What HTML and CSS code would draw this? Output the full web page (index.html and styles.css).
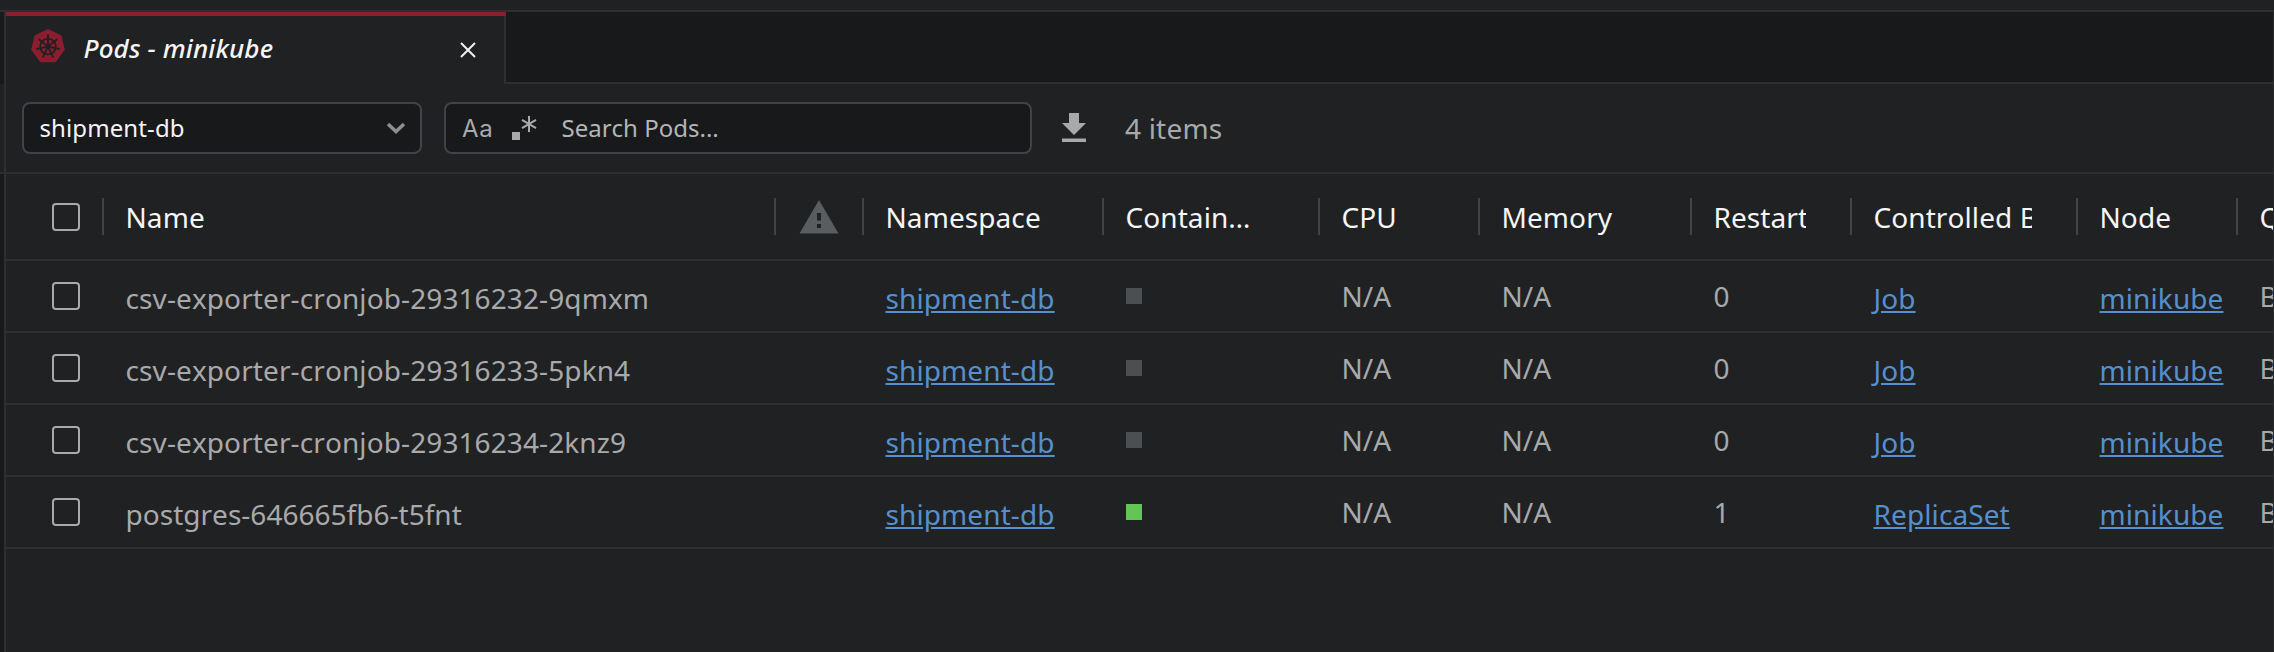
FILE: index.html
```html
<!DOCTYPE html>
<html lang="en">
<head>
<meta charset="utf-8">
<title>Pods - minikube</title>
<link rel="stylesheet" href="styles.css">
</head>
<body>
<div class="topstrip"></div>
<div class="app">
  <div class="gutter"><div class="gutter-tabs"></div><div class="gutter-toolbar"></div></div>
  <main class="panel">
    <nav class="tabs">
      <div class="tab">
        <svg class="tab-icon" viewBox="0 0 34 34">
          <path class="hept" d="M17 0 L30.400 6.400 L33.800 20.800 L24.600 33.200 L9.400 33.200 L.2 20.800 L3.600 6.400Z"/>
          <g class="wheel">
            <circle cx="17" cy="17.500" r="7.800"/>
            <path d="M17 17.500V5.500"/>
            <path d="M17 17.500V5.500" transform="rotate(51.430 17 17.500)"/>
            <path d="M17 17.500V5.500" transform="rotate(102.860 17 17.500)"/>
            <path d="M17 17.500V5.500" transform="rotate(154.290 17 17.500)"/>
            <path d="M17 17.500V5.500" transform="rotate(205.710 17 17.500)"/>
            <path d="M17 17.500V5.500" transform="rotate(257.140 17 17.500)"/>
            <path d="M17 17.500V5.500" transform="rotate(308.570 17 17.500)"/>
          </g>
        </svg>
        <span class="tab-title">Pods - minikube</span>
        <svg class="close" viewBox="0 0 16 16"><path d="M1 1L15 15M15 1L1 15"/></svg>
      </div>
      <div class="tabs-rest"></div>
    </nav>
    <div class="toolbar">
      <div class="select"><span>shipment-db</span><svg viewBox="0 0 20 12"><path d="M2 2L10 9.500L18 2"/></svg></div>
      <div class="search">
        <span class="case">Aa</span>
        <svg class="regex" viewBox="0 0 26 26"><path class="dot" d="M0 17h8v8H0z"/><path class="star" d="M17 1v16M10 4.800l14 8.400M24 4.800l-14 8.400"/></svg>
        <span class="placeholder">Search Pods...</span>
      </div>
      <svg class="download" viewBox="0 0 24 30"><path d="M7 0h10v10h7L12 22 0 10h7zM0 25.500h24v3.500H0z"/></svg>
      <span class="count">4 items</span>
    </div>
    <section class="table">
      <div class="row head">
        <div class="pick"><i class="box"></i></div>
        <div class="th">Name</div>
        <div class="th warn"><svg viewBox="0 0 40 34"><path fill-rule="evenodd" d="M20 0L39.500 33.500H.5zM18 13v7.500h4V13zM18 24v4h4v-4z"/></svg></div>
        <div class="th"><span>Namespace</span></div>
        <div class="th"><span>Contain…</span></div>
        <div class="th"><span>CPU</span></div>
        <div class="th"><span>Memory</span></div>
        <div class="th"><span>Restarts</span></div>
        <div class="th"><span>Controlled By</span></div>
        <div class="th"><span>Node</span></div>
        <div class="th last"><span>QoS</span></div>
      </div>
      <div class="row">
        <div class="pick"><i class="box"></i></div>
        <div class="td name">csv-exporter-cronjob-29316232-9qmxm</div><div></div>
        <div class="td"><a>shipment-db</a></div><div class="td"><i class="status"></i></div>
        <div class="td">N/A</div><div class="td">N/A</div><div class="td">0</div>
        <div class="td"><a>Job</a></div><div class="td"><a>minikube</a></div><div class="td">B</div>
      </div>
      <div class="row">
        <div class="pick"><i class="box"></i></div>
        <div class="td name">csv-exporter-cronjob-29316233-5pkn4</div><div></div>
        <div class="td"><a>shipment-db</a></div><div class="td"><i class="status"></i></div>
        <div class="td">N/A</div><div class="td">N/A</div><div class="td">0</div>
        <div class="td"><a>Job</a></div><div class="td"><a>minikube</a></div><div class="td">B</div>
      </div>
      <div class="row">
        <div class="pick"><i class="box"></i></div>
        <div class="td name">csv-exporter-cronjob-29316234-2knz9</div><div></div>
        <div class="td"><a>shipment-db</a></div><div class="td"><i class="status"></i></div>
        <div class="td">N/A</div><div class="td">N/A</div><div class="td">0</div>
        <div class="td"><a>Job</a></div><div class="td"><a>minikube</a></div><div class="td">B</div>
      </div>
      <div class="row">
        <div class="pick"><i class="box"></i></div>
        <div class="td name short">postgres-646665fb6-t5fnt</div><div></div>
        <div class="td"><a>shipment-db</a></div><div class="td"><i class="status running"></i></div>
        <div class="td">N/A</div><div class="td">N/A</div><div class="td">1</div>
        <div class="td"><a>ReplicaSet</a></div><div class="td"><a>minikube</a></div><div class="td">B</div>
      </div>
    </section>
  </main>
</div>
</body>
</html>
```
FILE: styles.css
```css
* { box-sizing: border-box; }
body {
  margin: 0;
  width: 2274px;
  height: 652px;
  overflow: hidden;
  background: #202123;
  color: #a8a9aa;
  font-family: "Noto Sans", sans-serif;
  font-size: 28px;
  font-kerning: none;
  line-height: 38px;
  display: flex;
  flex-direction: column;
}
svg { display: block; flex: none; }
.topstrip { height: 12px; border-bottom: 2px solid #2e2f31; flex: none; }
.app { flex: 1; display: flex; min-height: 0; border-right: 1px solid #2a2b2d; }
.gutter { width: 4px; flex: none; background: #18191b; }
.gutter-tabs { height: 72px; background: #18191b; }
.gutter-toolbar { height: 90px; background: #202123; border-bottom: 2px solid #2e2f31; }
.panel {
  flex: 1;
  min-width: 0;
  border-left: 2px solid #2e2f31;
  display: flex;
  flex-direction: column;
}

/* Tabs */
.tabs { display: flex; height: 72px; flex: none; }
.tab {
  width: 500px;
  border-top: 4px solid #8b1e2e;
  padding: 0 30px 0 25px;
  display: flex;
  align-items: center;
  background: linear-gradient(#2e2f31, #2e2f31) right top / 2px 100% no-repeat;
}
.tab-icon { width: 34px; height: 34px; margin-bottom: 8px; }
.hept { fill: #8b1e2e; }
.wheel { fill: none; stroke: #202123; stroke-width: 1.8; }
.tab-title {
  flex: 1;
  margin: -4px 0 0 18.5px;
  font-size: 26px;
  font-style: italic;
  font-weight: 500;
  letter-spacing: .12px;
  color: #f5f5f5;
}
.close { width: 16px; height: 16px; fill: none; stroke: #f0f0f0; stroke-width: 2; }
.tabs-rest { flex: 1; background: #18191b; border-bottom: 2px solid #2e2f31; }

/* Toolbar */
.toolbar {
  height: 90px;
  flex: none;
  padding-left: 16px;
  border-bottom: 2px solid #2e2f31;
  display: flex;
  align-items: center;
  font-size: 24px;
}
.select, .search {
  height: 52px;
  background: #18191b;
  border: 2px solid #424348;
  border-radius: 8px;
  display: flex;
  align-items: center;
}
.select { width: 400px; padding: 0 14px 0 15.5px; justify-content: space-between; letter-spacing: .1px; color: #f5f5f5; }
.select svg { width: 20px; height: 12px; fill: none; stroke: #8e8f90; stroke-width: 3.5; }
.search { width: 588px; margin-left: 22px; padding-left: 16px; }
.case { font-family: Inter, sans-serif; width: 50px; padding-top: 2px; letter-spacing: .8px; }
.regex { width: 26px; height: 26px; }
.dot { fill: #a8a9aa; }
.star { fill: none; stroke: #a8a9aa; stroke-width: 2; }
.placeholder { margin-left: 23.5px; color: #b4b5b6; }
.download { width: 24px; height: 30px; margin-left: 30px; fill: #a8a9aa; }
.count { margin-left: 39px; font-size: 28px; letter-spacing: .2px; }

/* Table */
.row {
  display: grid;
  grid-template-columns: 96px 672px 88px 240px 216px 160px 212px 160px 226px 160px 37px;
  height: 72px;
  align-items: center;
  border-bottom: 2px solid #2e2f31;
  white-space: nowrap;
}
.head { height: 87px; color: #f5f5f5; }
.pick { padding-left: 46px; }
.box { display: block; width: 28px; height: 28px; border: 2px solid #a8a9aa; border-radius: 4px; }
.th {
  height: 37px;
  border-left: 2px solid #424346;
  padding: 0 44px 0 21.5px;
  line-height: 38px;
  letter-spacing: .08px;
  overflow: hidden;
}
.th span { display: block; overflow: hidden; }
.last { padding-right: 0; overflow: hidden; }
.warn { padding: 2px 0 0 23px; }
.warn svg { width: 40px; height: 34px; fill: #5a5d60; }
.td { padding-left: 23.5px; overflow: hidden; }
.td .status { margin-left: .5px; }
.name, .td:has(a) { padding-top: 3px; letter-spacing: .1px; }
.short { letter-spacing: .02px; }
a { color: #5490cd; text-decoration: underline; }
.status { display: block; width: 16px; height: 16px; background: #4c4f52; }
.running { background: #65c458; }
```
